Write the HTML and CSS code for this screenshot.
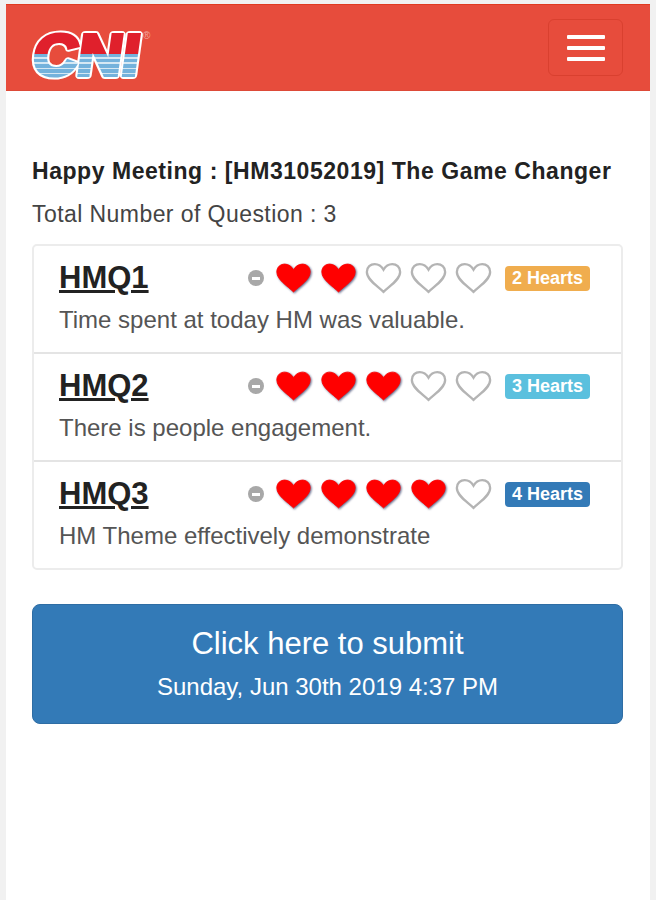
FILE: index.html
```html
<!DOCTYPE html>
<html lang="en">
<head>
    <meta charset="UTF-8">
    <meta name="viewport" content="width=device-width, initial-scale=1.0">
    <title>Happy Meeting</title>
    <link rel="stylesheet" href="styles.css">
</head>
<body>
    <svg class="defs" width="0" height="0">
        <defs>
            <symbol id="heart" viewBox="0 0 40 34">
                <path d="M20 32 C14 26 2 19 2 10.5 C2 5 6 2 10.500 2 C14.500 2 18 4.500 20 8 C22 4.500 25.500 2 29.500 2 C34 2 38 5 38 10.500 C38 19 26 26 20 32 Z"/>
            </symbol>
            <linearGradient id="logo-fill" gradientUnits="userSpaceOnUse" x1="0" y1="-42" x2="0" y2="2">
                <stop offset="0.47" stop-color="#e0202c"/>
                <stop offset="0.47" stop-color="#74b2dc"/>
                <stop offset="0.55" stop-color="#74b2dc"/>
                <stop offset="0.55" stop-color="#d5e8f4"/>
                <stop offset="0.58" stop-color="#d5e8f4"/>
                <stop offset="0.58" stop-color="#74b2dc"/>
                <stop offset="0.67" stop-color="#74b2dc"/>
                <stop offset="0.67" stop-color="#d5e8f4"/>
                <stop offset="0.7" stop-color="#d5e8f4"/>
                <stop offset="0.7" stop-color="#74b2dc"/>
                <stop offset="0.79" stop-color="#74b2dc"/>
                <stop offset="0.79" stop-color="#d5e8f4"/>
                <stop offset="0.82" stop-color="#d5e8f4"/>
                <stop offset="0.82" stop-color="#74b2dc"/>
                <stop offset="0.91" stop-color="#74b2dc"/>
                <stop offset="0.91" stop-color="#d5e8f4"/>
                <stop offset="0.94" stop-color="#d5e8f4"/>
                <stop offset="0.94" stop-color="#74b2dc"/>
            </linearGradient>
        </defs>
    </svg>

    <div class="page">
        <nav class="navbar">
            <svg class="logo" width="124" height="84" viewBox="0 0 124 84">
                <g transform="translate(1 69) skewX(-8)">
                    <text class="logo-text logo-outline" textLength="106" lengthAdjust="spacingAndGlyphs">CNI</text>
                    <text class="logo-text" textLength="106" lengthAdjust="spacingAndGlyphs">CNI</text>
                </g>
                <text class="logo-mark" x="113" y="33">®</text>
            </svg>
            <button class="toggle" aria-label="Menu">
                <span class="bar"></span>
                <span class="bar"></span>
                <span class="bar"></span>
            </button>
        </nav>

        <main class="content">
            <h4 class="title">Happy Meeting : [HM31052019] The Game Changer</h4>
            <p class="total">Total Number of Question : 3</p>

            <ul class="list">
                <li class="item">
                    <div class="item-head">
                        <a class="code" href="#">HMQ1</a>
                        <div class="rating">
                            <span class="clear"></span>
                            <svg class="heart on"><use href="#heart"/></svg>
                            <svg class="heart on"><use href="#heart"/></svg>
                            <svg class="heart"><use href="#heart"/></svg>
                            <svg class="heart"><use href="#heart"/></svg>
                            <svg class="heart"><use href="#heart"/></svg>
                            <span class="label label-warning">2 Hearts</span>
                        </div>
                    </div>
                    <p class="desc">Time spent at today HM was valuable.</p>
                </li>
                <li class="item">
                    <div class="item-head">
                        <a class="code" href="#">HMQ2</a>
                        <div class="rating">
                            <span class="clear"></span>
                            <svg class="heart on"><use href="#heart"/></svg>
                            <svg class="heart on"><use href="#heart"/></svg>
                            <svg class="heart on"><use href="#heart"/></svg>
                            <svg class="heart"><use href="#heart"/></svg>
                            <svg class="heart"><use href="#heart"/></svg>
                            <span class="label label-info">3 Hearts</span>
                        </div>
                    </div>
                    <p class="desc">There is people engagement.</p>
                </li>
                <li class="item">
                    <div class="item-head">
                        <a class="code" href="#">HMQ3</a>
                        <div class="rating">
                            <span class="clear"></span>
                            <svg class="heart on"><use href="#heart"/></svg>
                            <svg class="heart on"><use href="#heart"/></svg>
                            <svg class="heart on"><use href="#heart"/></svg>
                            <svg class="heart on"><use href="#heart"/></svg>
                            <svg class="heart"><use href="#heart"/></svg>
                            <span class="label label-primary">4 Hearts</span>
                        </div>
                    </div>
                    <p class="desc">HM Theme effectively demonstrate</p>
                </li>
            </ul>

            <button class="btn-submit">
                <span class="btn-main">Click here to submit</span>
                <span class="btn-sub">Sunday, Jun 30th 2019 4:37 PM</span>
            </button>
        </main>
    </div>
</body>
</html>
```

FILE: styles.css
```css
* {
    box-sizing: border-box;
}
body {
    font-family: "Liberation Sans", Arial, sans-serif;
    margin: 0;
    padding: 4px 6px 0 6px;
    height: 900px;
    overflow: hidden;
    background-color: #f1f1f1;
    color: #333;
}
.defs {
    position: absolute;
}
.page {
    background-color: #fff;
    height: 100%;
}
.navbar {
    height: 87px;
    background-color: #e74c3c;
    border-top: 1px solid #e03a20;
    border-bottom: 1px solid #dd4a38;
    display: flex;
    justify-content: space-between;
    align-items: center;
    padding: 0 27px 0 24px;
}
.logo {
    display: block;
}
.logo-text {
    font-family: "Liberation Sans", Arial, sans-serif;
    font-size: 58px;
    font-weight: bold;
    fill: url(#logo-fill);
    stroke: url(#logo-fill);
    stroke-width: 4px;
}
.logo-outline {
    fill: #fff;
    stroke: #fff;
    stroke-width: 8px;
    stroke-linejoin: round;
}
.logo-mark {
    font-size: 10px;
    fill: #f2a79e;
}
.toggle {
    width: 75px;
    height: 57px;
    background: transparent;
    border: 1px solid #d9402f;
    border-radius: 6px;
    display: flex;
    flex-direction: column;
    justify-content: center;
    align-items: center;
    gap: 7px;
    padding: 0;
}
.bar {
    display: block;
    width: 38px;
    height: 4px;
    background-color: #fff;
    border-radius: 1px;
}
.content {
    padding: 68px 27px 0 26px;
}
.title {
    font-size: 23px;
    font-weight: bold;
    letter-spacing: 0.55px;
    line-height: 24px;
    color: #222;
    margin: 0 0 19px 0;
    white-space: nowrap;
}
.total {
    font-size: 23px;
    letter-spacing: 0.43px;
    line-height: 24px;
    color: #444;
    margin: 0 0 18px 0;
}
.list {
    list-style: none;
    margin: 0 0 34px 0;
    padding: 0;
    border: 2px solid #ececec;
    border-radius: 5px;
}
.item {
    height: 108px;
    padding: 12px 31px 0 25px;
    border-bottom: 2px solid #e4e4e4;
}
.item:last-child {
    height: 106px;
    border-bottom: none;
}
.item-head {
    display: flex;
    justify-content: space-between;
    align-items: center;
    height: 40px;
}
.code {
    font-size: 31px;
    font-weight: bold;
    color: #222;
}
.rating {
    display: flex;
    align-items: center;
}
.clear {
    width: 16px;
    height: 16px;
    border-radius: 50%;
    background-color: #a8a8a8;
    margin-right: 11px;
    display: flex;
    align-items: center;
    justify-content: center;
}
.clear::after {
    content: "";
    width: 8px;
    height: 3px;
    background-color: #fff;
}
.heart {
    width: 37px;
    height: 32px;
    margin-right: 8px;
    fill: #fff;
    stroke: #b4b4b4;
    stroke-width: 2.5px;
}
.heart.on {
    fill: #ff0000;
    stroke: #ff0000;
    stroke-width: 1px;
    filter: drop-shadow(1px 1px 1px #5f6688);
}
.label {
    font-size: 18px;
    font-weight: bold;
    color: #fff;
    border-radius: 4px;
    padding: 2px 7px;
    line-height: 21px;
    margin-left: 5px;
    white-space: nowrap;
}
.label-warning {
    background-color: #f0ad4e;
}
.label-info {
    background-color: #5bc0de;
}
.label-primary {
    background-color: #337ab7;
}
.desc {
    font-size: 24px;
    line-height: 26px;
    color: #555;
    margin: 9px 0 0 0;
    white-space: nowrap;
}
.btn-submit {
    display: block;
    width: 100%;
    height: 120px;
    background-color: #337ab7;
    border: 1px solid #2e6da4;
    border-radius: 8px;
    color: #fff;
    font-family: inherit;
    padding: 0 0 2px 0;
    text-align: center;
}
.btn-main {
    display: block;
    font-size: 31px;
    line-height: 34px;
}
.btn-sub {
    display: block;
    font-size: 24px;
    line-height: 26px;
    margin-top: 13px;
}
```
